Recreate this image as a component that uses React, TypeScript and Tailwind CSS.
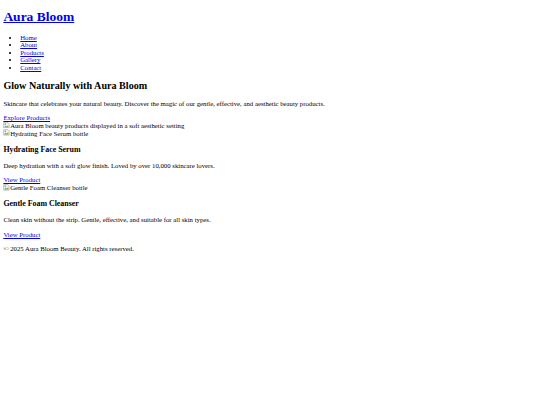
import React from "react";

function Broken({ alt }: { alt: string }) {
  return (
    <span>
      <svg width="6.75" height="6.75" viewBox="0 0 16 16" className="inline align-[-0.5px]">
        <path d="M1.5 1.5 H12 L14.5 4 V14.5 H1.5 Z" fill="#f4f4f4" stroke="#a0a0a0" strokeWidth="1.5" />
        <path d="M3 13 L6.5 8 L9 11 L12 7.5 L13 13 Z" fill="#6aa84f" />
        <circle cx="5.5" cy="5.5" r="1.8" fill="#5b9bd5" />
      </svg>
      {alt}
    </span>
  );
}

export default function App() {
  return (
    <div className="bg-white text-black min-h-[405px] px-[3.375px] py-[0.1px] text-[6.75px] leading-[7.55px] font-['Liberation_Serif',serif]">
      <header>
        <h1 className="text-[13.5px] leading-[15.4px] font-bold my-[9.05px]">
          <a href="#" className="text-[#0000ee] underline">Aura Bloom</a>
        </h1>
        <nav>
          <ul className="list-disc pl-[16.875px] my-[6.75px]">
            <li><a href="#" className="text-[#0000ee] underline">Home</a></li>
            <li><a href="#" className="text-[#0000ee] underline">About</a></li>
            <li><a href="#" className="text-[#0000ee] underline">Products</a></li>
            <li><a href="#" className="text-[#0000ee] underline">Gallery</a></li>
            <li><a href="#" className="text-[#0000ee] underline">Contact</a></li>
          </ul>
        </nav>
      </header>
      <main>
        <section>
          <h2 className="text-[10.125px] leading-[11.6px] font-bold my-[8.4px]">Glow Naturally with Aura Bloom</h2>
          <p className="my-[6.75px]">Skincare that celebrates your natural beauty. Discover the magic of our gentle, effective, and aesthetic beauty products.</p>
          <a href="#" className="text-[#0000ee] underline">Explore Products</a>
          <div><Broken alt="Aura Bloom beauty products displayed in a soft aesthetic setting" /></div>
        </section>
        <section>
          <div>
            <Broken alt="Hydrating Face Serum bottle" />
            <h3 className="text-[7.9px] leading-[9px] font-bold my-[7.9px]">Hydrating Face Serum</h3>
            <p className="my-[6.75px]">Deep hydration with a soft glow finish. Loved by over 10,000 skincare lovers.</p>
            <a href="#" className="text-[#0000ee] underline">View Product</a>
          </div>
          <div>
            <Broken alt="Gentle Foam Cleanser bottle" />
            <h3 className="text-[7.9px] leading-[9px] font-bold my-[7.9px]">Gentle Foam Cleanser</h3>
            <p className="my-[6.75px]">Clean skin without the strip. Gentle, effective, and suitable for all skin types.</p>
            <a href="#" className="text-[#0000ee] underline">View Product</a>
          </div>
        </section>
      </main>
      <footer>
        <p className="my-[6.75px]">© 2025 Aura Bloom Beauty. All rights reserved.</p>
      </footer>
    </div>
  );
}
